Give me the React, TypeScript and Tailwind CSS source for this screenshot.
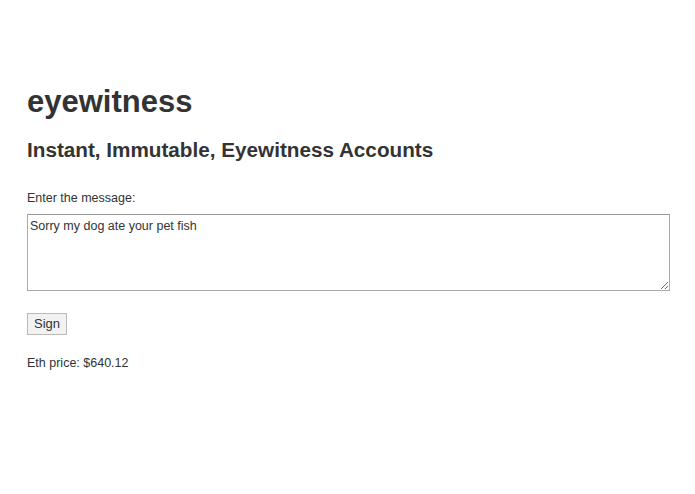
export default function App() {
  return (
    <div className="min-h-screen bg-white pl-[27px] pr-[25px] pt-[80px] text-[#333] font-['Liberation_Sans',Arial,sans-serif]">
      <h1 className="text-[31px] font-semibold leading-[44px]">eyewitness</h1>
      <h2 className="mt-[11px] text-[20.7px] font-semibold leading-[30px]">
        Instant, Immutable, Eyewitness Accounts
      </h2>

      <div className="mt-[25px]">
        <label className="block text-[12.5px] leading-[16px]">Enter the message:</label>
        <textarea
          className="mt-[8px] block h-[77px] w-full resize-y border border-[#aaa] border-t-[#999] px-[2px] pt-[4px] pb-[2px] text-[12.5px] leading-[15px] text-[#333] outline-none"
          defaultValue="Sorry my dog ate your pet fish"
        />
      </div>

      <button className="mt-[22px] block h-[22px] border border-[#bbb] bg-[#f2f2f2] px-[6px] text-[13px] leading-[20px]">
        Sign
      </button>

      <p className="mt-[20px] text-[12.5px] leading-[16px]">Eth price: $640.12</p>
    </div>
  );
}
